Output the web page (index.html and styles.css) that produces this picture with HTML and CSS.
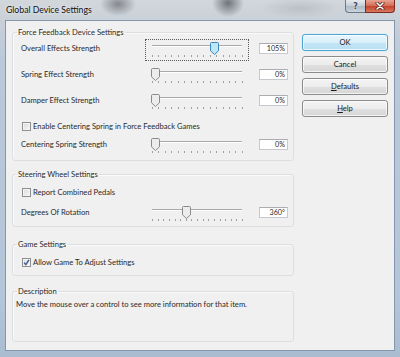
FILE: index.html
```html
<!DOCTYPE html>
<html>
<head>
<meta charset="utf-8">
<title>Global Device Settings</title>
<link rel="stylesheet" href="styles.css">
</head>
<body>
<div class="window">
  <div class="titlebar">
    <span class="title">Global Device Settings</span>
    <div class="caption-buttons">
      <span class="cap-btn help-btn">?</span>
      <span class="cap-btn close-btn">
        <svg width="10" height="8" viewBox="0 0 10 8"><path d="M2 1L8 7M8 1L2 7" stroke="#4a1d1a" stroke-width="3" stroke-linecap="round"/><path d="M2 1L8 7M8 1L2 7" stroke="#ffffff" stroke-width="1.6" stroke-linecap="round"/></svg>
      </span>
    </div>
  </div>
  <div class="client">
    <div class="groups">
      <fieldset class="group group-ff">
        <legend>Force Feedback Device Settings</legend>
        <div class="slider-row">
          <span class="label">Overall Effects Strength</span>
          <div class="slider focused">
            <div class="track"></div>
            <svg class="thumb thumb-blue" style="left:64px" width="9" height="13" viewBox="0 0 9 13"><path d="M1.5 0.5h6a1 1 0 0 1 1 1v7.3l-4 3.7l-4-3.7v-7.3a1 1 0 0 1 1-1z"/></svg>
            <div class="ticks"><i></i><i></i><i></i><i></i><i></i><i></i><i></i><i></i><i></i><i></i><i></i><i></i><i></i><i></i><i></i></div>
          </div>
          <span class="value">105%</span>
        </div>
        <div class="slider-row">
          <span class="label">Spring Effect Strength</span>
          <div class="slider">
            <div class="track"></div>
            <svg class="thumb" style="left:5px" width="9" height="13" viewBox="0 0 9 13"><path d="M1.5 0.5h6a1 1 0 0 1 1 1v7.3l-4 3.7l-4-3.7v-7.3a1 1 0 0 1 1-1z"/></svg>
            <div class="ticks"><i></i><i></i><i></i><i></i><i></i><i></i><i></i><i></i><i></i><i></i><i></i><i></i><i></i><i></i><i></i></div>
          </div>
          <span class="value">0%</span>
        </div>
        <div class="slider-row">
          <span class="label">Damper Effect Strength</span>
          <div class="slider">
            <div class="track"></div>
            <svg class="thumb" style="left:5px" width="9" height="13" viewBox="0 0 9 13"><path d="M1.5 0.5h6a1 1 0 0 1 1 1v7.3l-4 3.7l-4-3.7v-7.3a1 1 0 0 1 1-1z"/></svg>
            <div class="ticks"><i></i><i></i><i></i><i></i><i></i><i></i><i></i><i></i><i></i><i></i><i></i><i></i><i></i><i></i><i></i></div>
          </div>
          <span class="value">0%</span>
        </div>
        <label class="check-row check-centering">
          <span class="checkbox"></span>
          <span>Enable Centering Spring in Force Feedback Games</span>
        </label>
        <div class="slider-row row-centering">
          <span class="label">Centering Spring Strength</span>
          <div class="slider">
            <div class="track"></div>
            <svg class="thumb" style="left:5px" width="9" height="13" viewBox="0 0 9 13"><path d="M1.5 0.5h6a1 1 0 0 1 1 1v7.3l-4 3.7l-4-3.7v-7.3a1 1 0 0 1 1-1z"/></svg>
            <div class="ticks"><i></i><i></i><i></i><i></i><i></i><i></i><i></i><i></i><i></i><i></i><i></i><i></i><i></i><i></i><i></i></div>
          </div>
          <span class="value">0%</span>
        </div>
      </fieldset>

      <fieldset class="group group-wheel">
        <legend>Steering Wheel Settings</legend>
        <label class="check-row">
          <span class="checkbox"></span>
          <span>Report Combined Pedals</span>
        </label>
        <div class="slider-row row-degrees">
          <span class="label">Degrees Of Rotation</span>
          <div class="slider">
            <div class="track"></div>
            <svg class="thumb" style="left:36px" width="9" height="13" viewBox="0 0 9 13"><path d="M1.5 0.5h6a1 1 0 0 1 1 1v7.3l-4 3.7l-4-3.7v-7.3a1 1 0 0 1 1-1z"/></svg>
            <div class="ticks"><i></i><i></i><i></i><i></i><i></i><i></i><i></i><i></i><i></i><i></i><i></i><i></i><i></i><i></i><i></i><i></i><i></i></div>
          </div>
          <span class="value">360°</span>
        </div>
      </fieldset>

      <fieldset class="group group-game">
        <legend>Game Settings</legend>
        <label class="check-row">
          <span class="checkbox checked">
            <svg width="7" height="7" viewBox="0 0 7 7"><path d="M1 3.6L2.8 5.6L6 0.8" fill="none" stroke="#3d5a8f" stroke-width="1.4"/></svg>
          </span>
          <span>Allow Game To Adjust Settings</span>
        </label>
      </fieldset>

      <fieldset class="group group-desc">
        <legend>Description</legend>
        <p class="desc-text">Move the mouse over a control to see more information for that item.</p>
      </fieldset>
    </div>

    <div class="buttons">
      <button class="btn btn-default">OK</button>
      <button class="btn">Cancel</button>
      <button class="btn"><u>D</u>efaults</button>
      <button class="btn"><u>H</u>elp</button>
    </div>
  </div>
</div>
</body>
</html>
```

FILE: styles.css
```css
html, body {
  margin: 0;
  padding: 0;
}

body {
  width: 400px;
  height: 357px;
  overflow: hidden;
  font-family: "Lato", "Liberation Sans", sans-serif;
  font-size: 7.6px;
  color: #2a2a2a;
}

.window {
  width: 400px;
  height: 357px;
  box-sizing: border-box;
  display: flex;
  flex-direction: column;
  background:
    radial-gradient(ellipse 18px 12px at 118px 4px, rgba(70,72,76,.55), rgba(70,72,76,0)),
    radial-gradient(ellipse 16px 14px at 228px 3px, rgba(45,50,56,.6), rgba(45,50,56,0)),
    radial-gradient(ellipse 40px 10px at 300px 8px, rgba(150,156,162,.35), rgba(150,156,162,0)),
    linear-gradient(to bottom, #d3d7dc 0px, #c9d0d8 20px, #b9c9da 60px, #b3c5d8 300px, #a9bcd0 357px);
}

.titlebar {
  height: 20px;
  display: flex;
  align-items: flex-start;
  flex: none;
}

.title {
  padding-left: 6px;
  line-height: 20px;
  font-size: 8.7px;
  color: #111;
  text-shadow: 0 0 4px rgba(255,255,255,.9);
}

.caption-buttons {
  margin-left: auto;
  margin-right: 5px;
  display: flex;
}

.cap-btn {
  height: 13px;
  box-sizing: border-box;
  display: flex;
  align-items: center;
  justify-content: center;
  border: 1px solid #6d7884;
  border-top: none;
}

.help-btn {
  width: 20px;
  border-radius: 0 0 0 4px;
  border-right: none;
  background: linear-gradient(#e6eaee, #c3ccd6 50%, #aeb9c6 51%, #c8d3df);
  color: #3c4a5a;
  font-family: "DejaVu Sans", sans-serif;
  font-size: 8px;
  font-weight: bold;
  text-shadow: 0 0 2px #fff;
}

.close-btn {
  width: 30px;
  border-radius: 0 0 4px 0;
  border-color: #7a2a22;
  background: linear-gradient(#e8a493, #d36a55 50%, #c2412a 51%, #d9795d);
}

.client {
  flex: 1;
  margin: 0 5px 6px 5px;
  border: 1px solid #8497ae;
  background: #f0f0f0;
  display: flex;
  gap: 8px;
}

.groups {
  margin-left: 6px;
  padding-top: 6px;
  width: 282px;
  display: flex;
  flex-direction: column;
}

.group {
  box-sizing: border-box;
  width: 282px;
  margin: 0;
  border: 1px solid #dcdfe2;
  border-radius: 3px;
  box-shadow: inset 1px 1px 0 #fafafa;
  padding: 0 4px 0 8px;
  min-width: 0;
}

.group legend {
  padding: 0 1px;
  margin-left: -4px;
  line-height: 10px;
  height: 10px;
  font-size: 7.6px;
}

.group-ff {
  padding-top: 2px;
  padding-bottom: 3px;
}

.group-wheel {
  margin-top: 8px;
  padding-top: 7px;
  padding-bottom: 1px;
}

.group-game {
  margin-top: 12px;
  padding-top: 7px;
  padding-bottom: 7px;
}

.group-desc {
  margin-top: 10px;
  padding: 3px 4px 0 3px;
  height: 56px;
}

.group-desc legend {
  margin-left: 1px;
}

.slider-row {
  display: flex;
  align-items: flex-start;
  height: 22px;
}

.slider-row + .slider-row {
  margin-top: 4px;
}

.row-centering {
  margin-top: 3px;
}

.row-degrees {
  margin-top: 5px;
}

.label {
  width: 124px;
  flex: none;
  padding-top: 4px;
  line-height: 10px;
}

.slider {
  position: relative;
  width: 104px;
  height: 22px;
  box-sizing: border-box;
  border: 1px dotted transparent;
  flex: none;
}

.slider.focused {
  border-color: #5a5a5a;
}

.track {
  position: absolute;
  left: 6px;
  width: 90px;
  top: 5px;
  height: 1px;
  background: #a9a9a9;
  border-bottom: 1px solid #ffffff;
}

.thumb {
  position: absolute;
  top: 2px;
}

.thumb path {
  fill: #ececec;
  stroke: #8a8a8a;
}

.thumb-blue path {
  fill: #bfe6f7;
  stroke: #3d86b8;
}

.ticks {
  position: absolute;
  left: 6px;
  width: 91px;
  top: 15px;
  height: 2px;
  display: flex;
  justify-content: space-between;
}

.ticks i {
  width: 1px;
  height: 2px;
  background: #a0a0a0;
}

.value {
  margin-left: 10px;
  margin-top: 4px;
  width: 29px;
  height: 11px;
  box-sizing: border-box;
  border: 1px solid #c5cad0;
  border-top-color: #abadb3;
  background: #ffffff;
  text-align: right;
  padding-right: 2px;
  line-height: 9px;
  font-size: 7.2px;
  flex: none;
}

.check-row {
  display: flex;
  align-items: center;
  gap: 2px;
  height: 12px;
  margin-left: 1px;
}

.check-centering {
  margin-top: 7px;
}

.checkbox {
  width: 9px;
  height: 9px;
  box-sizing: border-box;
  border: 1px solid #8f8f8f;
  background: linear-gradient(135deg, #d9d9d9, #f7f7f7);
  box-shadow: inset 0 0 0 1px #f4f4f4;
  display: flex;
  align-items: center;
  justify-content: center;
  flex: none;
}

.desc-text {
  margin: 0;
  line-height: 10px;
}

.buttons {
  padding-top: 13px;
  width: 86px;
  display: flex;
  flex-direction: column;
  gap: 5px;
}

.btn {
  height: 17px;
  box-sizing: border-box;
  margin: 0;
  padding: 0;
  border: 1px solid #8b8b8b;
  border-radius: 3px;
  background: linear-gradient(#f4f4f4 0%, #ececec 50%, #e0e0e0 51%, #d6d6d6 100%);
  box-shadow: inset 0 0 0 1px rgba(255,255,255,.7);
  font-family: inherit;
  font-size: 7.6px;
  color: #1a1a1a;
  text-align: center;
  line-height: 15px;
}

.btn u {
  text-decoration-thickness: 1px;
  text-underline-offset: 1px;
}

.btn-default {
  border-color: #4ba6d4;
  background: linear-gradient(#e8f6fd 0%, #d8eff9 50%, #c4e6f6 51%, #b6dff2 100%);
  box-shadow: inset 0 0 0 1px rgba(255,255,255,.75), 0 0 1px #8fd0ee;
}
```
